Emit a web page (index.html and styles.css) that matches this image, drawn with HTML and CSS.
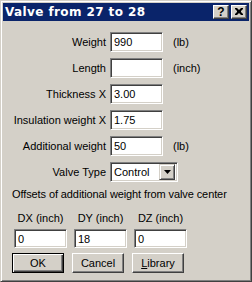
FILE: index.html
```html
<!DOCTYPE html>
<html>
<head>
<meta charset="utf-8">
<link rel="stylesheet" href="styles.css">
</head>
<body>
<div class="window">
  <div class="titlebar">
    <span class="title">Valve from 27 to 28</span>
    <div class="caption-buttons">
      <span class="cap-btn help">?</span>
      <span class="cap-btn close">
        <svg width="8" height="7" viewBox="0 0 8 7"><path d="M0 0h2l2 2 2-2h2v1l-2 2v1l2 2v1h-2l-2-2-2 2h-2v-1l2-2v-1l-2-2z" fill="#000"/></svg>
      </span>
    </div>
  </div>
  <div class="content">
    <div class="row"><span class="label">Weight</span><span class="field">990</span><span class="unit">(lb)</span></div>
    <div class="row"><span class="label">Length</span><span class="field"></span><span class="unit">(inch)</span></div>
    <div class="row"><span class="label">Thickness X</span><span class="field">3.00</span></div>
    <div class="row"><span class="label">Insulation weight X</span><span class="field">1.75</span></div>
    <div class="row"><span class="label">Additional weight</span><span class="field">50</span><span class="unit">(lb)</span></div>
    <div class="row"><span class="label">Valve Type</span>
      <span class="combo"><span class="combo-text">Control</span><span class="combo-btn"><svg width="7" height="4" viewBox="0 0 7 4"><path d="M0 0h7l-3.5 4z" fill="#000"/></svg></span></span>
    </div>
    <div class="note">Offsets of additional weight from valve center</div>
    <div class="offsets">
      <div class="col"><span class="col-label">DX (inch)</span><span class="field small">0</span></div>
      <div class="col"><span class="col-label">DY (inch)</span><span class="field small">18</span></div>
      <div class="col"><span class="col-label">DZ (inch)</span><span class="field small">0</span></div>
    </div>
    <div class="buttons">
      <span class="btn default"><span class="btn-inner">OK</span></span>
      <span class="btn"><span class="btn-inner">Cancel</span></span>
      <span class="btn"><span class="btn-inner"><u>L</u>ibrary</span></span>
    </div>
  </div>
</div>
</body>
</html>
```
FILE: styles.css
```css
* { box-sizing: border-box; }
html, body { margin: 0; padding: 0; background: #d4d0c8; }
body { font-family: "Liberation Sans", Arial, sans-serif; font-size: 11px; color: #000; }

.window {
  width: 252px;
  height: 282px;
  background: #d4d0c8;
  border: 1px solid;
  border-color: #d4d0c8 #404040 #404040 #d4d0c8;
  box-shadow: inset 1px 1px #fff, inset -1px -1px #808080;
  padding: 2px;
  display: flex;
  flex-direction: column;
}

.titlebar {
  height: 18px;
  flex-shrink: 0;
  background: #0a246a;
  display: flex;
  align-items: center;
  justify-content: space-between;
  padding: 0 2px 0 2px;
}
.title {
  color: #fff;
  font-weight: bold;
  font-size: 12px;
  font-family: "DejaVu Sans", "Liberation Sans", sans-serif;
  letter-spacing: 0.4px;
}
.caption-buttons { display: flex; gap: 2px; }
.cap-btn {
  width: 16px;
  height: 14px;
  background: #d4d0c8;
  border: 1px solid;
  border-color: #fff #404040 #404040 #fff;
  box-shadow: inset -1px -1px #808080;
  display: flex;
  align-items: center;
  justify-content: center;
  font-weight: bold;
  font-size: 12px;
  line-height: 1;
  padding-bottom: 1px;
}

.content {
  padding: 11px 0 0 0;
  display: flex;
  flex-direction: column;
}
.row {
  display: flex;
  align-items: center;
  height: 20px;
  margin-bottom: 6px;
}
.label {
  width: 103px;
  text-align: right;
  margin-right: 4px;
}
.field {
  width: 53px;
  height: 20px;
  background: #fff;
  border: 1px solid;
  border-color: #808080 #fff #fff #808080;
  box-shadow: inset 1px 1px #404040, inset -1px -1px #d4d0c8;
  padding: 0 3px;
  display: flex;
  align-items: center;
}
.unit { margin-left: 10px; }

.combo {
  width: 68px;
  height: 20px;
  background: #fff;
  border: 1px solid;
  border-color: #808080 #fff #fff #808080;
  box-shadow: inset 1px 1px #404040, inset -1px -1px #d4d0c8;
  padding: 2px;
  display: flex;
  align-items: center;
  justify-content: space-between;
}
.combo-text { padding-left: 1px; }
.combo-btn {
  width: 16px;
  height: 16px;
  background: #d4d0c8;
  border: 1px solid;
  border-color: #d4d0c8 #404040 #404040 #d4d0c8;
  box-shadow: inset 1px 1px #fff, inset -1px -1px #808080;
  display: flex;
  align-items: center;
  justify-content: center;
}

.note {
  margin-left: 9px;
  height: 14px;
  letter-spacing: -0.1px;
}
.offsets {
  display: flex;
  gap: 7px;
  margin-left: 11px;
  margin-top: 10px;
}
.col {
  display: flex;
  flex-direction: column;
  align-items: center;
  gap: 5px;
}
.field.small { height: 19px; }
.buttons {
  display: flex;
  gap: 8px;
  margin-left: 9px;
  margin-top: 5px;
}
.btn {
  width: 52px;
  height: 20px;
  background: #d4d0c8;
  border: 1px solid;
  border-color: #fff #404040 #404040 #fff;
  box-shadow: inset -1px -1px #808080;
  display: flex;
  align-items: center;
  justify-content: center;
}
.btn.default {
  border: 1px solid #000;
  box-shadow: inset 1px 1px #fff, inset -1px -1px #404040, inset -2px -2px #808080;
}
.btn-inner u { text-decoration: underline; }
```
